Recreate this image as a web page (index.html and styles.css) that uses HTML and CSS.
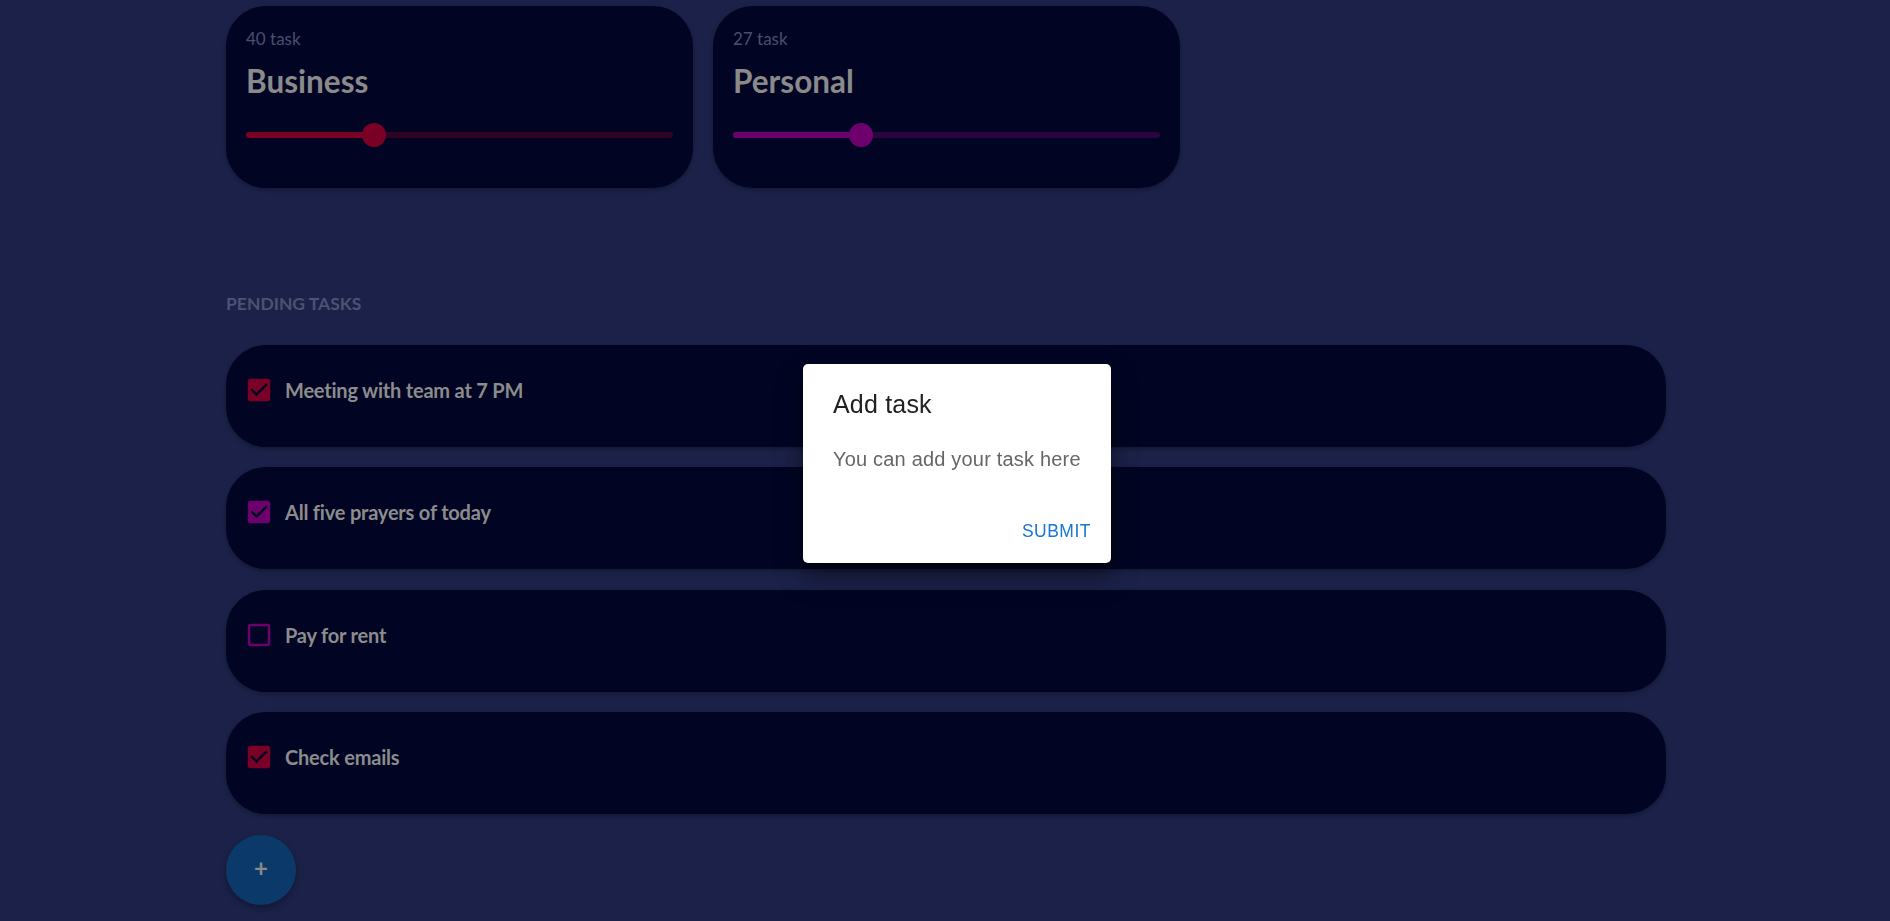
FILE: index.html
```html
<!DOCTYPE html>
<html lang="en">
<head>
<meta charset="utf-8">
<title>Tasks</title>
<link rel="stylesheet" href="styles.css">
</head>
<body>
<main class="page">
  <section class="cats">
    <div class="cat cat-business">
      <div class="cat-count">40 task</div>
      <div class="cat-name">Business</div>
      <div class="slider">
        <div class="rail"></div>
        <div class="track" style="width:30%"></div>
        <div class="thumb" style="left:30%"></div>
      </div>
    </div>
    <div class="cat cat-personal">
      <div class="cat-count">27 task</div>
      <div class="cat-name">Personal</div>
      <div class="slider">
        <div class="rail"></div>
        <div class="track" style="width:30%"></div>
        <div class="thumb" style="left:30%"></div>
      </div>
    </div>
  </section>

  <h2 class="section-title">PENDING TASKS</h2>

  <section class="tasks">
    <div class="task">
      <svg class="cb cb-business" viewBox="0 0 24 24"><path d="M19 3H5c-1.11 0-2 .9-2 2v14c0 1.1.89 2 2 2h14c1.11 0 2-.9 2-2V5c0-1.1-.89-2-2-2zm-9 14l-5-5 1.41-1.410L10 14.17l7.59-7.59L19 8l-9 9z"/></svg>
      <span class="task-text">Meeting with team at 7 PM</span>
    </div>
    <div class="task">
      <svg class="cb cb-personal" viewBox="0 0 24 24"><path d="M19 3H5c-1.11 0-2 .9-2 2v14c0 1.1.89 2 2 2h14c1.11 0 2-.9 2-2V5c0-1.1-.89-2-2-2zm-9 14l-5-5 1.41-1.41L10 14.17l7.59-7.59L19 8l-9 9z"/></svg>
      <span class="task-text">All five prayers of today</span>
    </div>
    <div class="task">
      <svg class="cb cb-personal" viewBox="0 0 24 24"><path d="M19 5v14H5V5h14m0-2H5c-1.1 0-2 .9-2 2v14c0 1.1.9 2 2 2h14c1.1 0 2-.9 2-2V5c0-1.1-.9-2-2-2z"/></svg>
      <span class="task-text">Pay for rent</span>
    </div>
    <div class="task">
      <svg class="cb cb-business" viewBox="0 0 24 24"><path d="M19 3H5c-1.11 0-2 .9-2 2v14c0 1.1.89 2 2 2h14c1.11 0 2-.9 2-2V5c0-1.1-.89-2-2-2zm-9 14l-5-5 1.41-1.41L10 14.17l7.59-7.59L19 8l-9 9z"/></svg>
      <span class="task-text">Check emails</span>
    </div>
  </section>

  <button class="fab" type="button">+</button>
</main>

<div class="dialog" role="dialog">
  <h2 class="dialog-title">Add task</h2>
  <p class="dialog-text">You can add your task here</p>
  <div class="dialog-actions">
    <button class="dialog-btn" type="button">SUBMIT</button>
  </div>
</div>
</body>
</html>
```

FILE: styles.css
```css
* { box-sizing: border-box; }

html, body {
  margin: 0;
  padding: 0;
  height: 100%;
}

body {
  background: #1b2148;
  font-family: "Lato", "Noto Sans", sans-serif;
  overflow: hidden;
}

.page {
  width: 1442px;
  margin: 0 auto;
  padding: 6px 0 0 2px;
  display: flex;
  flex-direction: column;
  align-items: flex-start;
}

.cats {
  display: flex;
  gap: 20px;
}

.cat {
  width: 467px;
  height: 182px;
  background: #010523;
  border-radius: 40px;
  padding: 23px 20px 0 20px;
  box-shadow: 0 2px 4px rgba(0, 0, 0, 0.25);
}

.cat-count {
  font-size: 17px;
  line-height: 20px;
  color: #4a4f6e;
}

.cat-name {
  margin-top: 14px;
  font-size: 31.5px;
  line-height: 36px;
  font-weight: 700;
  color: #8a8a8a;
}

.slider {
  position: relative;
  margin-top: 24px;
  height: 24px;
  display: flex;
  align-items: center;
}

.rail {
  flex: 1;
  height: 6px;
  border-radius: 3px;
}

.track {
  position: absolute;
  left: 0;
  top: 9px;
  height: 6px;
  border-radius: 3px;
}

.thumb {
  position: absolute;
  top: 0;
  width: 24px;
  height: 24px;
  border-radius: 50%;
  transform: translateX(-50%);
}

.cat-business .rail { background: #2f0324; }
.cat-business .track,
.cat-business .thumb { background: #7a0026; }

.cat-personal .rail { background: #2a033f; }
.cat-personal .track,
.cat-personal .thumb { background: #6e006e; }

.section-title {
  margin: 106px 0 0 0;
  font-size: 17.5px;
  line-height: 20px;
  font-weight: 700;
  color: #4b5273;
}

.tasks {
  margin-top: 31px;
  width: 100%;
  display: flex;
  flex-direction: column;
  gap: 20.3px;
}

.task {
  height: 102px;
  background: #010523;
  border-radius: 40px;
  padding: 30px 18px 0 18px;
  display: flex;
  align-items: flex-start;
  gap: 11px;
  box-shadow: 0 2px 4px rgba(0, 0, 0, 0.25);
}

.cb {
  width: 30px;
  height: 30px;
  flex: none;
}

.cb-business { fill: #7a0026; }
.cb-personal { fill: #6e006e; }

.task-text {
  font-size: 20px;
  line-height: 31px;
  font-weight: 700;
  color: #8c8c8c;
  letter-spacing: -0.2px;
}

.fab {
  margin-top: 21px;
  width: 70px;
  height: 70px;
  border: none;
  border-radius: 50%;
  background: #0b3a6a;
  color: #8a8a8a;
  font-family: "Lato", sans-serif;
  font-weight: 700;
  font-size: 24px;
  line-height: 1;
  padding: 0 0 3px 0;
  box-shadow: 0 3px 6px rgba(0, 0, 0, 0.3);
}

.dialog {
  position: fixed;
  left: 803px;
  top: 364px;
  width: 308px;
  background: #ffffff;
  border-radius: 5px;
  font-family: "Liberation Sans", Arial, sans-serif;
  box-shadow: 0 14px 28px rgba(0, 0, 0, 0.35), 0 6px 10px rgba(0, 0, 0, 0.25);
}

.dialog-title {
  margin: 0;
  padding: 20px 30px 20px 30px;
  font-size: 25px;
  line-height: 40px;
  font-weight: 400;
  letter-spacing: 0.19px;
  color: #212121;
}

.dialog-text {
  margin: 0;
  padding: 0 30px 25px 30px;
  font-size: 20px;
  line-height: 30px;
  letter-spacing: 0.19px;
  color: #666666;
}

.dialog-actions {
  display: flex;
  justify-content: flex-end;
  padding: 10px;
}

.dialog-btn {
  border: none;
  background: none;
  padding: 7px 10px;
  font-family: "Liberation Sans", Arial, sans-serif;
  font-size: 17.5px;
  line-height: 30px;
  letter-spacing: 0.5px;
  color: #1976d2;
}
```
